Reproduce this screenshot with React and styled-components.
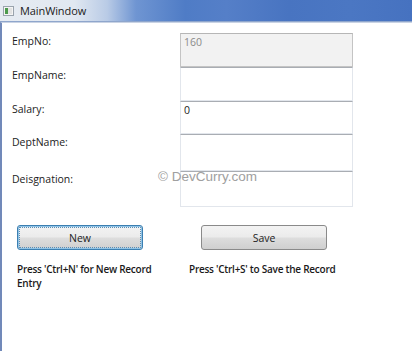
import React from "react";
import styled, { createGlobalStyle } from "styled-components";

const Global = createGlobalStyle`
  html, body { margin: 0; padding: 0; background: #fff; }
  body { font-family: "Open Sans", "Noto Sans", sans-serif; }
`;

const Window = styled.div`
  width: 412px;
  height: 351px;
  overflow: hidden;
  position: relative;
  display: flex;
  flex-direction: column;
  background: #fff;
`;

const TitleBar = styled.div`
  height: 22px;
  flex: none;
  display: flex;
  align-items: center;
  gap: 6px;
  padding-left: 3px;
  background: linear-gradient(90deg, #e6ebf2 0%, #e1e8f1 18%, #b9cbe6 26%, #6f95d2 33%, #4f7cc6 45%, #557fc8 55%, #4874c1 70%, #4b77c3 85%, #4672c0 100%);
  border-bottom: 1px solid #8fa6cc;
  box-sizing: border-box;
`;

const TitleText = styled.span`
  font-family: "Open Sans", "Noto Sans", sans-serif;
  font-size: 11px;
  color: #1b1b1b;
  letter-spacing: -0.1px;
`;

const Body = styled.div`
  flex: 1;
  display: flex;
  flex-direction: column;
  border-left: 2px solid #7189b9;
  border-top: 1px solid #c9d3e4;
  padding: 10px 0 0 10px;
  position: relative;
`;

const Form = styled.div`
  display: grid;
  grid-template-columns: 168px 173px;
`;

const Label = styled.div`
  font-size: 10.5px;
  color: #222;
  padding-top: 1px;
  height: ${(p) => p.$h}px;
  box-sizing: border-box;
  line-height: 14px;
`;

const TextBox = styled.div`
  height: ${(p) => p.$h}px;
  box-sizing: border-box;
  border: 1px solid #e2e6ec;
  border-top-color: #a9adb3;
  background: ${(p) => (p.$disabled ? "#f2f2f2" : "#fff")};
  color: ${(p) => (p.$disabled ? "#8a8a8a" : "#222")};
  font-size: 10.5px;
  line-height: 14px;
  padding: 1px 3px;
  ${(p) => p.$disabled && "border-color: #c4c4c4; border-top-color: #b6b6b6;"}
`;

const Actions = styled.div`
  display: grid;
  grid-template-columns: 172px 210px;
  margin-top: 18px;
  padding-left: 5px;
  row-gap: 12px;
`;

const Button = styled.div`
  width: 126px;
  height: 25px;
  box-sizing: border-box;
  margin-left: ${(p) => p.$offset || 0}px;
  border-radius: 3px;
  border: 1px solid ${(p) => (p.$focused ? "#3c7fb1" : "#8a8a8a")};
  background: linear-gradient(180deg, #f3f3f3 0%, #ebebeb 48%, #dddddd 52%, #cfcfcf 100%);
  display: flex;
  align-items: center;
  justify-content: center;
  font-size: 10.5px;
  color: #222;
  ${(p) =>
    p.$focused &&
    `box-shadow: inset 0 0 0 1px #8fc3e6; outline: 1px dotted #5a8db5; outline-offset: -3px;`}
`;

const Hint = styled.div`
  font-size: 10px;
  letter-spacing: -0.25px;
  font-weight: 600;
  color: #1a1a1a;
  line-height: 14px;
  width: ${(p) => p.$w}px;
`;

const Watermark = styled.div`
  position: absolute;
  left: 156px;
  top: 146px;
  font-family: "Liberation Sans", Arial, sans-serif;
  font-size: 13.5px;
  color: #a0a0a0;
`;

const AppIcon = () => (
  <svg width="11" height="10" viewBox="0 0 11 10">
    <rect x="0.5" y="0.5" width="10" height="9" fill="#f4f4f4" stroke="#9aa3ad" />
    <rect x="2" y="2" width="3" height="6" fill="#4c9a4c" />
    <rect x="5" y="2" width="4" height="6" fill="#e2e2e2" />
  </svg>
);

const fields = [
  { label: "EmpNo:", h: 34, value: "160", disabled: true },
  { label: "EmpName:", h: 34, value: "" },
  { label: "Salary:", h: 33, value: "0" },
  { label: "DeptName:", h: 37, value: "" },
  { label: "Deisgnation:", h: 36, value: "" },
];

export default function App() {
  return (
    <Window>
      <Global />
      <TitleBar>
        <AppIcon />
        <TitleText>MainWindow</TitleText>
      </TitleBar>
      <Body>
        <Form>
          {fields.map((f) => (
            <React.Fragment key={f.label}>
              <Label $h={f.h}>{f.label}</Label>
              <TextBox $h={f.h} $disabled={f.disabled}>{f.value}</TextBox>
            </React.Fragment>
          ))}
        </Form>
        <Actions>
          <Button $focused>New</Button>
          <Button $offset={12}>Save</Button>
          <Hint $w={145}>Press 'Ctrl+N' for New Record Entry</Hint>
          <Hint $w={200}>Press 'Ctrl+S' to Save the Record</Hint>
        </Actions>
        <Watermark>© DevCurry.com</Watermark>
      </Body>
    </Window>
  );
}
